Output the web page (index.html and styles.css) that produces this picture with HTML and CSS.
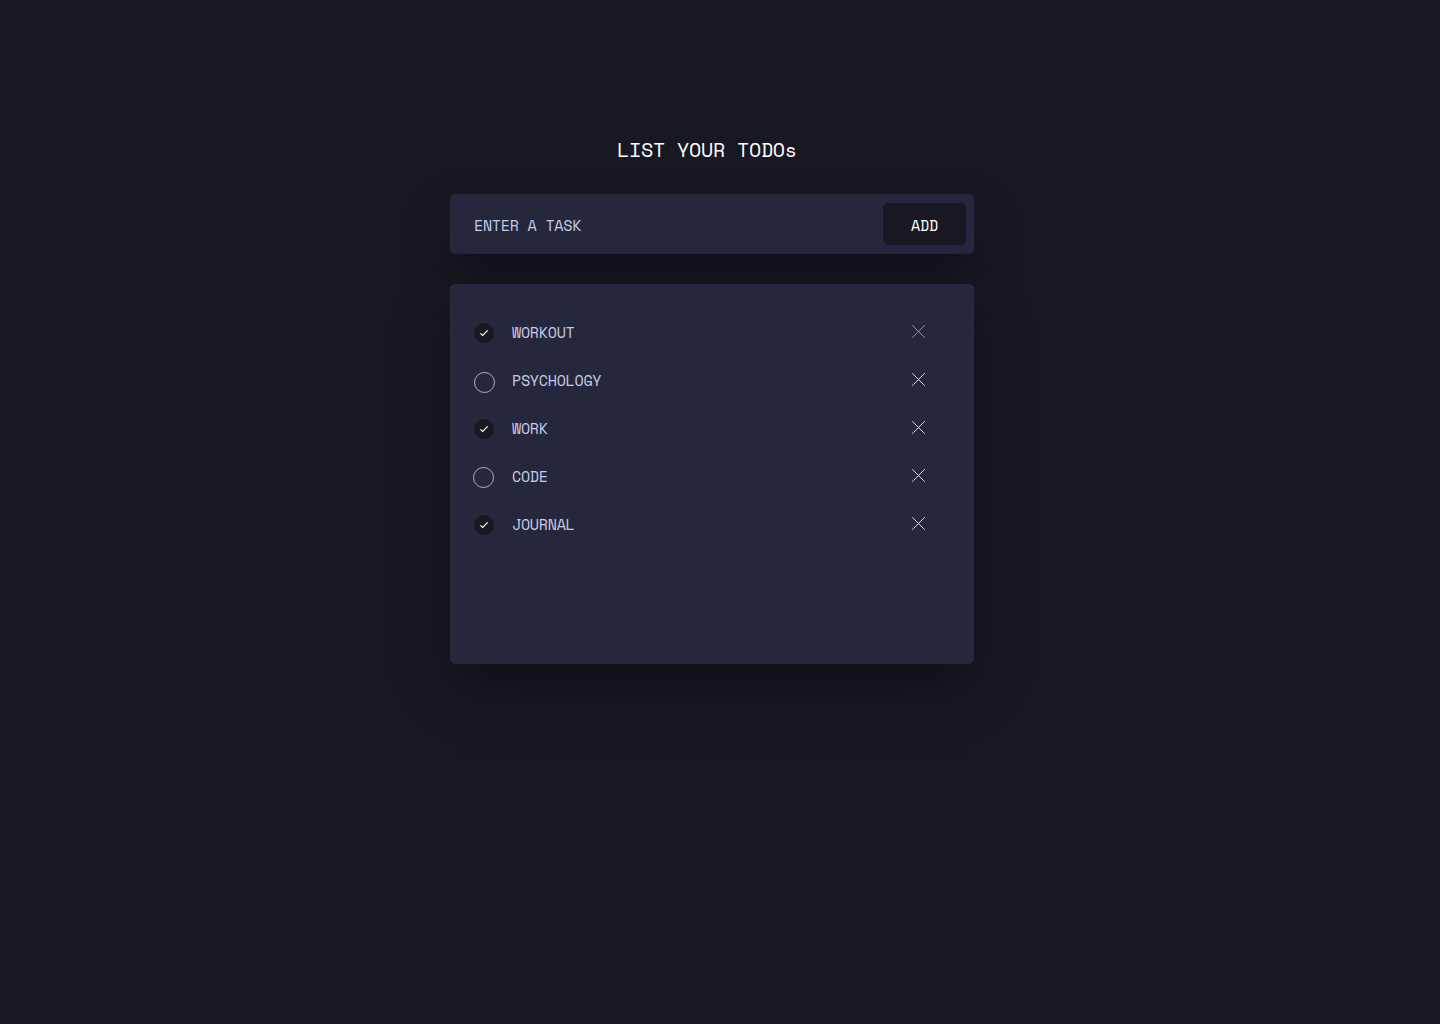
FILE: index.html
```html
<!DOCTYPE html>
<html lang="en">
<head>
<meta charset="utf-8">
<title>Todos</title>
<link rel="stylesheet" href="styles.css">
</head>
<body>
<svg class="symbols" aria-hidden="true">
  <symbol id="done" viewBox="0 0 22 22"><circle cx="11" cy="11" r="10" fill="#181822"/><path d="M7.4 11.4 9.6 13.4 14.7 8.4" fill="none" stroke="#fff" stroke-width="1.15"/></symbol>
  <symbol id="open" viewBox="0 0 21 21"><circle cx="10.5" cy="10.5" r="10" fill="none" stroke="#b0b0ba"/></symbol>
  <symbol id="cross" viewBox="0 0 13 13"><path d="M.2.2 12.8 12.8M12.8.2.2 12.8" fill="none" stroke="#e8e8ee" stroke-width=".9"/></symbol>
</svg>
<main class="app">
  <h1 class="title">LIST YOUR TODOs</h1>
  <form class="entry panel">
    <label class="prompt">ENTER A TASK</label>
    <button class="add" type="button">ADD</button>
  </form>
  <ul class="list panel">
    <li class="task"><svg class="check"><use href="#done"/></svg><span class="name">WORKOUT</span><svg class="remove faded"><use href="#cross"/></svg></li>
    <li class="task"><svg class="check ring"><use href="#open"/></svg><span class="name">PSYCHOLOGY</span><svg class="remove"><use href="#cross"/></svg></li>
    <li class="task"><svg class="check"><use href="#done"/></svg><span class="name">WORK</span><svg class="remove"><use href="#cross"/></svg></li>
    <li class="task"><svg class="check ring ring-left"><use href="#open"/></svg><span class="name">CODE</span><svg class="remove"><use href="#cross"/></svg></li>
    <li class="task"><svg class="check"><use href="#done"/></svg><span class="name">JOURNAL</span><svg class="remove"><use href="#cross"/></svg></li>
  </ul>
</main>
</body>
</html>
```
FILE: styles.css
```css
* { box-sizing: border-box; }
body {
  margin: 0;
  min-height: 100vh;
  background: #181822;
  font-family: "Space Mono", "Liberation Mono", monospace;
  font-size: 15px;
  letter-spacing: -0.25px;
  color: #c8cbe7;
}
.symbols { display: none; }
.app {
  width: 524px;
  min-height: 100vh;
  margin-left: 450px;
  padding-top: 136px;
}
.title {
  margin: 0 0 30px 167px;
  color: #fff;
  font-size: 20px;
  font-weight: 400;
  letter-spacing: -0.25px;
  line-height: 28px;
}
.panel {
  background: #25273c;
  border-radius: 5px;
  box-shadow: 0 25px 50px -10px rgba(0, 0, 0, .5);
}
.entry {
  display: flex;
  align-items: center;
  justify-content: space-between;
  height: 60px;
  margin: 0 0 30px;
  padding: 0 8px 0 24px;
}
.prompt { line-height: 24px; padding-top: 2px; }
.add {
  width: 83px;
  height: 42px;
  padding: 1px 0 0;
  border: 0;
  border-radius: 5px;
  background: #181822;
  color: #fff;
  font: inherit;
  letter-spacing: inherit;
}
.list {
  height: 380px;
  margin: 0;
  padding: 25px 49px 0 23px;
  list-style: none;
}
.task {
  display: flex;
  align-items: center;
  height: 48px;
}
.check { width: 22px; height: 22px; flex: none; }
.ring { width: 21px; height: 21px; margin: 3px 0 0 1px; }
.ring-left { margin: 1px 1px 0 0; }
.name { flex: 1; padding: 0 0 2px 17px; line-height: 24px; }
.remove { width: 13px; height: 13px; margin-top: -3px; flex: none; }
.faded { opacity: .6; }
```
